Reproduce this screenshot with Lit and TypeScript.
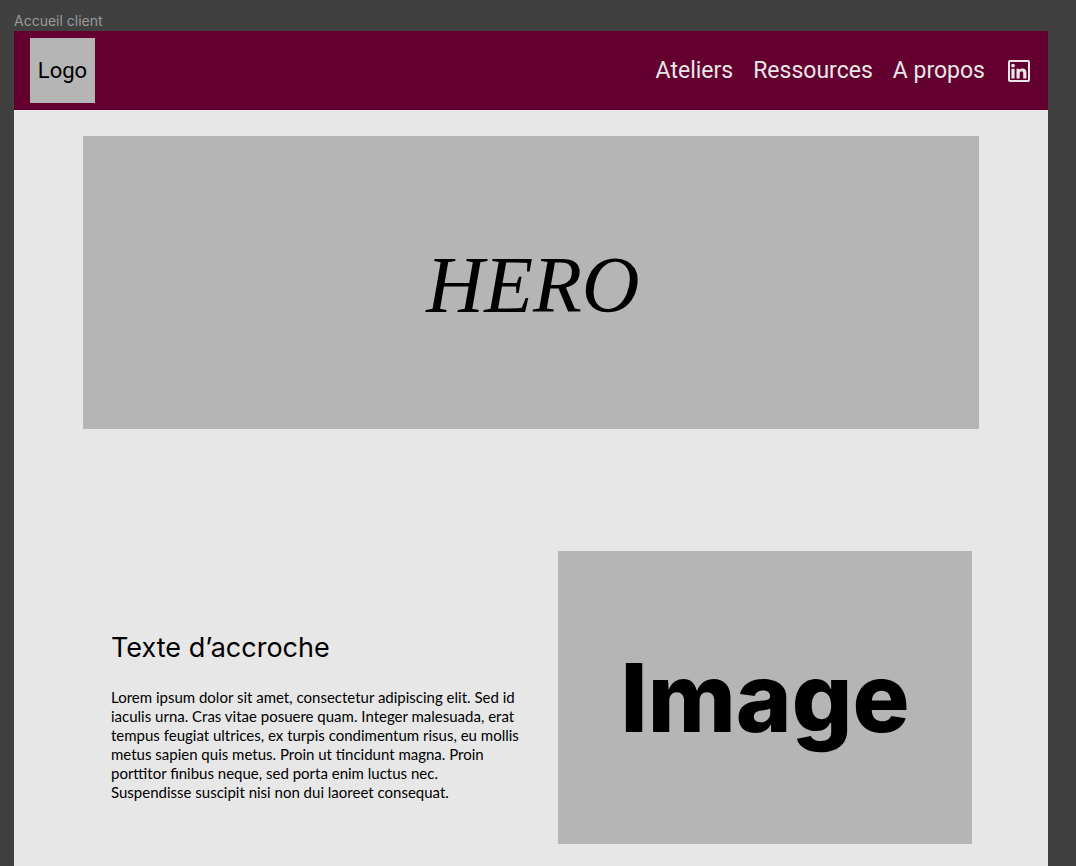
import { LitElement, html, css } from "lit";
import { customElement } from "lit/decorators.js";

const links = ["Ateliers", "Ressources", "A propos"];

const lines = [
  "Lorem ipsum dolor sit amet, consectetur adipiscing elit. Sed id",
  "iaculis urna. Cras vitae posuere quam. Integer malesuada, erat",
  "tempus feugiat ultrices, ex turpis condimentum risus, eu mollis",
  "metus sapien quis metus. Proin ut tincidunt magna. Proin",
  "porttitor finibus neque, sed porta enim luctus nec.",
  "Suspendisse suscipit nisi non dui laoreet consequat.",
];

@customElement("app-root")
export class AppRoot extends LitElement {
  static styles = css`
    :host {
      display: flex;
      flex-direction: column;
      box-sizing: border-box;
      min-height: 100vh;
      padding: 11px 28px 0 14px;
      background: #404040;
      color: #000;
      font-family: Roboto, "Open Sans", sans-serif;
    }
    .frame-name {
      padding-bottom: 1px;
      color: #9a9a9a;
      font: 14px/19px Inter, sans-serif;
    }
    .frame {
      flex: 1;
      background: #e7e7e7;
    }
    .bar {
      display: flex;
      align-items: center;
      justify-content: space-between;
      padding: 7px 17px 7px 16px;
      background: #640030;
    }
    .logo {
      display: grid;
      place-items: center;
      width: 65px;
      height: 65px;
      background: #b5b5b5;
      color: #000;
      font-size: 22px;
      text-decoration: none;
    }
    .nav {
      display: flex;
      align-items: center;
      gap: 20px;
    }
    .link {
      display: flex;
      align-items: center;
      color: #e7e7e7;
      font-size: 23px;
      line-height: 30px;
      text-decoration: none;
    }
    .main {
      padding: 26px 69px 22px;
    }
    .hero {
      display: grid;
      place-items: center;
      box-sizing: border-box;
      height: 293px;
      padding: 4px 0 0 4px;
      background: #b5b5b5;
    }
    .hero-title {
      margin: 0;
      font: italic 80px/92px "Liberation Serif", serif;
    }
    .intro {
      display: grid;
      grid-template-columns: 1fr 1fr;
      gap: 33px;
      margin-top: 122px;
      padding: 0 7px 0 28px;
    }
    .copy {
      padding-top: 80px;
    }
    .heading {
      margin: 0;
      font: 27px/34px Inter, sans-serif;
    }
    .text {
      margin: 23px 0 0;
      font: 400 15px/19px Lato, sans-serif;
    }
    .image {
      display: grid;
      place-items: center;
      height: 293px;
      background: #b5b5b5;
      font: 800 95px/112px Inter, sans-serif;
    }
  `;

  render() {
    return html`
      <div class="frame-name">Accueil client</div>
      <div class="frame">
        <header class="bar">
          <a class="logo" href="#">Logo</a>
          <nav class="nav">
            ${links.map((l) => html`<a class="link" href="#">${l}</a>`)}
            <a class="link" href="#" aria-label="LinkedIn">
              <svg width="26" height="28" viewBox="0 0 26 28" fill="#e7e7e7">
                <rect x="4" y="4" width="20" height="20" rx="1" fill="none" stroke="#e7e7e7" stroke-width="2" />
                <circle cx="8" cy="8.6" r="1.9" />
                <path d="M6.4 11.7h3.2v9.8H6.4zM11.5 11.7h3v1.3c.6-1 1.6-1.5 3-1.5 2.9 0 3.9 1.7 3.9 4.5v5.5h-3.2v-5c0-1.4-.4-2.3-1.6-2.3-1.4 0-1.9 1-1.9 2.3v5h-3.2z" />
              </svg>
            </a>
          </nav>
        </header>
        <main class="main">
          <section class="hero"><h1 class="hero-title">HERO</h1></section>
          <section class="intro">
            <div class="copy">
              <h2 class="heading">Texte d’accroche</h2>
              <p class="text">${lines.map((l, i) => (i ? html`<br />${l}` : l))}</p>
            </div>
            <div class="image">Image</div>
          </section>
        </main>
      </div>
    `;
  }
}
